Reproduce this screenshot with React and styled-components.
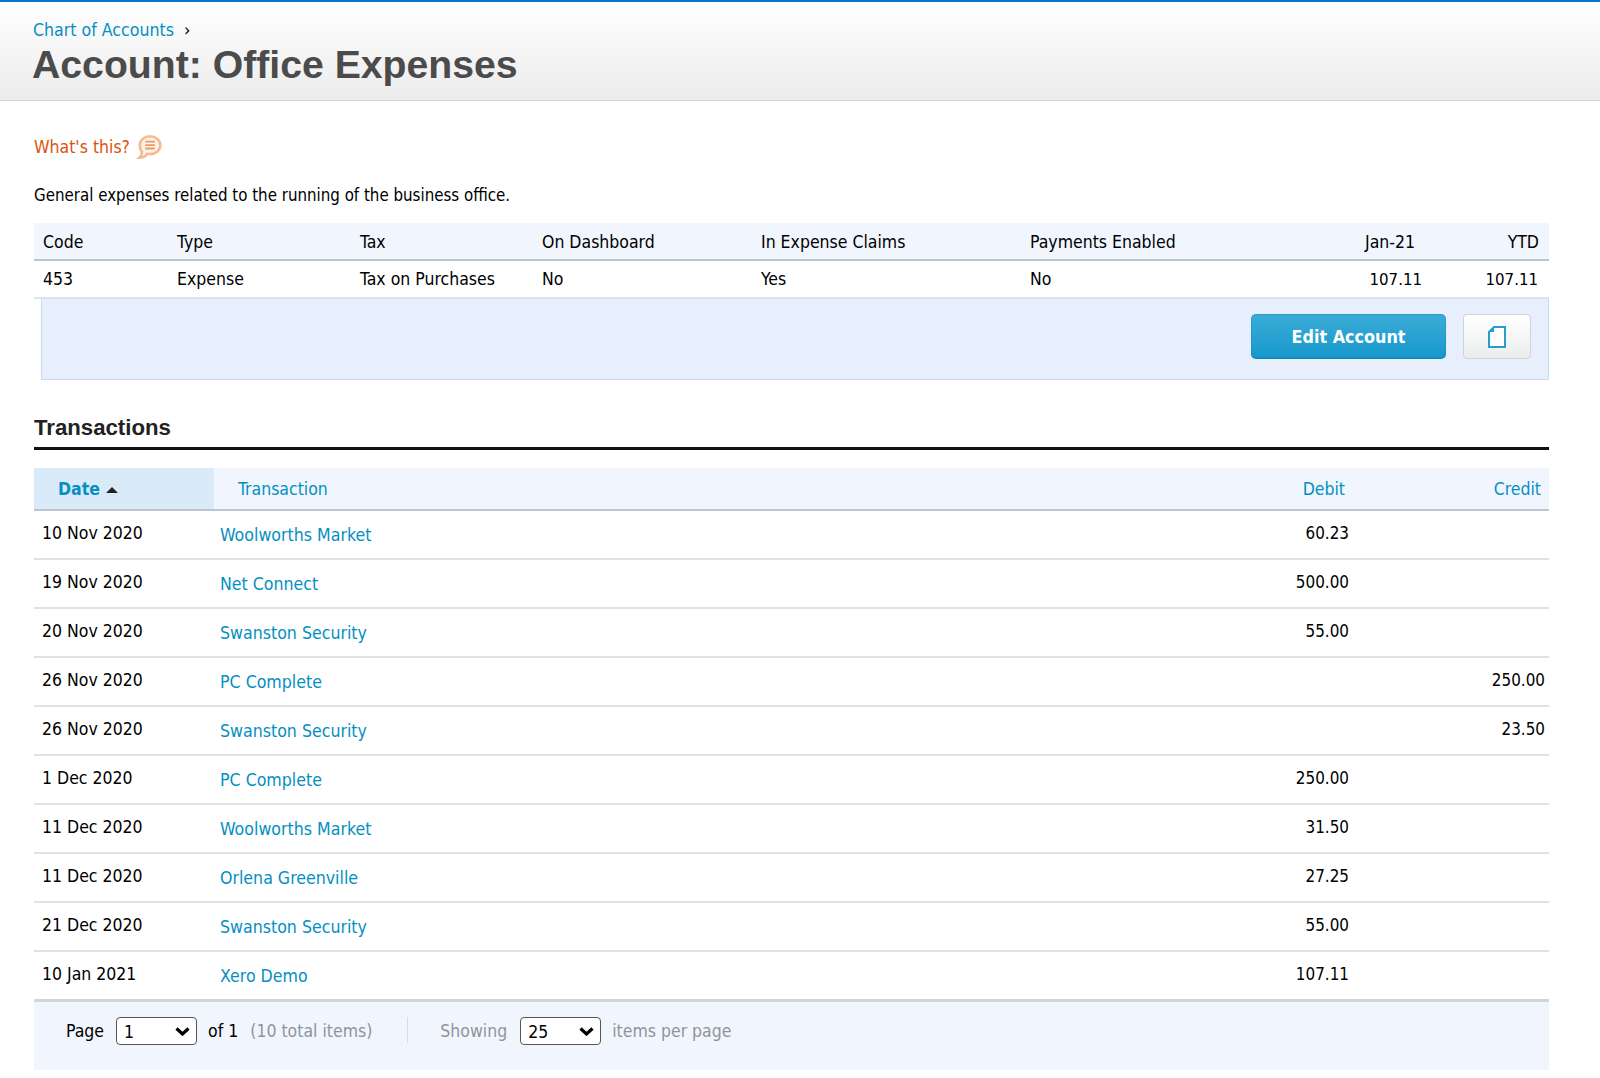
import React from 'react';
import styled, { createGlobalStyle } from 'styled-components';

const font = `"DejaVu Sans", Tahoma, Verdana, sans-serif`;
const heading = `"Liberation Sans", Arial, sans-serif`;
const blue = '#048fc2';
const chevron = `url("data:image/svg+xml,%3Csvg xmlns='http://www.w3.org/2000/svg' width='15' height='9' viewBox='0 0 15 9'%3E%3Cpath d='M1.5 1.5l6 5.5 6-5.5' fill='none' stroke='%23000' stroke-width='3.2'/%3E%3C/svg%3E")`;

const GlobalStyle = createGlobalStyle`
  html, body { margin: 0; padding: 0; background: #fff; }
  body { font-family: ${font}; font-size: 17.5px; font-stretch: condensed; color: #000; }
`;

const Page = styled.div`
  min-height: 1078px;
  display: flex;
  flex-direction: column;
`;

const Header = styled.header`
  height: 98px;
  box-sizing: content-box;
  border-top: 2px solid #0678cf;
  border-bottom: 1px solid #d6d6d6;
  margin-bottom: -1px;
  padding: 0 33px;
  background: linear-gradient(#ffffff, #ececec);
`;

const Crumbs = styled.div`
  padding-top: 17px;
  height: 22px;
  line-height: 22px;
  font-size: 17.6px;
  display: flex;
  align-items: center;
  gap: 10px;
`;

const Crumb = styled.a`
  color: ${blue};
  text-decoration: none;
`;

const Title = styled.h1`
  margin: 0 0 0 -1px;
  padding-top: 1px;
  font-family: ${heading};
  font-size: 39.2px;
  line-height: 46px;
  font-weight: 700;
  color: #4b4b4b;
  font-stretch: normal;
`;

const Main = styled.main`
  padding: 36px 51px 0 34px;
`;

const Help = styled.div`
  display: flex;
  align-items: center;
  gap: 5px;
  height: 22px;
  color: #d9550f;
  font-size: 17.5px;
`;

const Description = styled.p`
  margin: 26px 0 17px;
  line-height: 22px;
  font-size: 16.75px;
`;

const Table = styled.table`
  width: 100%;
  border-collapse: collapse;
  table-layout: fixed;
  font-size: 17.5px;
`;

const InfoHead = styled.th`
  height: 35px;
  padding: 1px ${p => (p.$right ? '10px' : '0')} 0 ${p => (p.$right ? '0' : '9px')};
  background: #f1f6fe;
  border-bottom: 2px solid #bcc6d3;
  font-weight: 400;
  text-align: ${p => (p.$right ? 'right' : 'left')};
`;

const InfoCell = styled.td`
  height: 36px;
  padding: 0 ${p => p.$padRight || 0}px 0 ${p => (p.$right ? '0' : '9px')};
  border-bottom: 2px solid #dde3ec;
  text-align: ${p => (p.$right ? 'right' : 'left')};
  font-size: ${p => (p.$right ? '16.7px' : 'inherit')};
`;

const Actions = styled.div`
  margin-left: 7px;
  height: 81px;
  box-sizing: border-box;
  border: 1px solid #c5d9f1;
  border-top: 0;
  background: #e8effc;
  padding: 15px 17px 0 0;
  display: flex;
  justify-content: flex-end;
  align-items: flex-start;
  gap: 17px;
`;

const EditButton = styled.button`
  width: 195px;
  height: 45px;
  border: 0;
  border-bottom: 1px solid #1586b4;
  border-radius: 5px;
  background: linear-gradient(#3cacd7, #1798cc);
  box-shadow: inset 0 0 0 1px rgba(20, 130, 175, 0.35);
  color: #fff;
  font-family: ${font};
  font-stretch: condensed;
  font-size: 17.8px;
  font-weight: 700;
`;

const IconButton = styled.button`
  width: 68px;
  height: 45px;
  padding: 0;
  display: flex;
  align-items: center;
  justify-content: center;
  border: 1px solid #d0d3d5;
  border-radius: 4px;
  background: linear-gradient(#ffffff, #ebeded);
`;

const SectionTitle = styled.h2`
  margin: 33px 0 0;
  height: 34px;
  font-family: ${heading};
  font-size: 22.2px;
  line-height: 30px;
  font-weight: 700;
  color: #222;
  border-bottom: 3px solid #111;
  box-sizing: content-box;
`;

const Transactions = styled(Table)`
  margin-top: 18px;
`;

const SortHead = styled.th`
  height: 40px;
  padding: 1px 0 0 ${p => p.$pad || 0}px;
  background: ${p => (p.$active ? '#d9eaf9' : '#f1f6fe')};
  border-bottom: 2px solid #bcc6d3;
  color: ${blue};
  font-weight: ${p => (p.$active ? 700 : 400)};
  text-align: ${p => (p.$right ? 'right' : 'left')};
  padding-right: ${p => p.$padRight || 0}px;
  font-size: 17.5px;
`;

const SortArrow = styled.span`
  display: inline-block;
  margin-left: 6px;
  vertical-align: 2px;
  border-left: 6px solid transparent;
  border-right: 6px solid transparent;
  border-bottom: 6px solid #222;
`;

const Row = styled.tr`
  height: 49px;
  border-bottom: 2px solid #dfe1e3;
  &:last-child {
    height: 48px;
    border-bottom: 0;
  }
`;

const DateCell = styled.td`
  padding: 0 0 3px 8px;
`;

const LinkCell = styled.td`
  padding: 1px 0 0 6px;
  color: ${blue};
  font-size: 17.6px;
`;

const AmountCell = styled.td`
  padding: 0 ${p => p.$pad}px 3px 0;
  text-align: right;
  font-size: 16.9px;
`;

const Footer = styled.footer`
  height: 71px;
  box-sizing: border-box;
  border-top: 3px solid #d2d4d6;
  background: #f1f6fe;
  padding: 16px 0 0 32px;
  display: flex;
  align-items: flex-start;
  font-size: 17.5px;
  line-height: 27px;
`;

const Muted = styled.span`
  color: #8f949a;
`;

const Divider = styled.span`
  width: 1px;
  height: 26px;
  margin: -1px 32px 0 35px;
  background: #d3deec;
`;

const PageSelect = styled.select`
  appearance: none;
  width: 81px;
  height: 28px;
  margin: -1px 11px 0 ${p => p.$gap}px;
  padding: 2px 0 0 7px;
  box-sizing: border-box;
  border: 1px solid #555;
  border-radius: 4px;
  background: #fff ${chevron} no-repeat right 6px center;
  color: #000;
  font-family: ${font};
  font-stretch: condensed;
  font-size: 17.5px;
`;

const TotalItems = styled(Muted)`
  margin-left: 12px;
`;

const ChatIcon = () => (
  <svg width="28" height="28" viewBox="0 0 26 26">
    <path d="M14 3c5.2 0 9.500 3.800 9.500 8.300s-4.300 8.300-9.500 8.300c-.9 0-1.800-.1-2.600-.3-1.300 2.100-4 3.700-7.400 3.700 1.500-1.400 2.400-3.200 2.600-5.500C5 15.900 4.500 13.500 4.500 11.300 4.500 6.800 8.800 3 14 3z" fill="#fef3ea" stroke="#f5bb90" strokeWidth="2.4" />
    <path d="M9.500 8h9M9.500 11.200h9M9.500 14.400h9" stroke="#eb9a63" strokeWidth="1.7" fill="none" />
  </svg>
);

const DocIcon = () => (
  <svg width="20" height="24" viewBox="0 0 20 24">
    <path d="M7 2h11v20H2V7z" fill="#fff" stroke="#2a9cc9" strokeWidth="2" />
    <path d="M7 2v5H2z" fill="#2a9cc9" />
  </svg>
);

const infoColumns = [134, 183, 182, 219, 269, 0, 85];

const transactions = [
  ['10 Nov 2020', 'Woolworths Market', '60.23', ''],
  ['19 Nov 2020', 'Net Connect', '500.00', ''],
  ['20 Nov 2020', 'Swanston Security', '55.00', ''],
  ['26 Nov 2020', 'PC Complete', '', '250.00'],
  ['26 Nov 2020', 'Swanston Security', '', '23.50'],
  ['1 Dec 2020', 'PC Complete', '250.00', ''],
  ['11 Dec 2020', 'Woolworths Market', '31.50', ''],
  ['11 Dec 2020', 'Orlena Greenville', '27.25', ''],
  ['21 Dec 2020', 'Swanston Security', '55.00', ''],
  ['10 Jan 2021', 'Xero Demo', '107.11', ''],
];

export default function App() {
  return (
    <Page>
      <GlobalStyle />
      <Header>
        <Crumbs>
          <Crumb href="#">Chart of Accounts</Crumb>
          <span>›</span>
        </Crumbs>
        <Title>Account: Office Expenses</Title>
      </Header>
      <Main>
        <Help>
          What's this? <ChatIcon />
        </Help>
        <Description>General expenses related to the running of the business office.</Description>
        <Table>
          <colgroup>
            {infoColumns.map((w, i) => (
              <col key={i} style={w ? { width: w } : undefined} />
            ))}
            <col style={{ width: 124 }} />
          </colgroup>
          <thead>
            <tr>
              <InfoHead>Code</InfoHead>
              <InfoHead>Type</InfoHead>
              <InfoHead>Tax</InfoHead>
              <InfoHead>On Dashboard</InfoHead>
              <InfoHead>In Expense Claims</InfoHead>
              <InfoHead>Payments Enabled</InfoHead>
              <InfoHead $right>Jan-21</InfoHead>
              <InfoHead $right>YTD</InfoHead>
            </tr>
          </thead>
          <tbody>
            <tr>
              <InfoCell>453</InfoCell>
              <InfoCell>Expense</InfoCell>
              <InfoCell>Tax on Purchases</InfoCell>
              <InfoCell>No</InfoCell>
              <InfoCell>Yes</InfoCell>
              <InfoCell>No</InfoCell>
              <InfoCell $right $padRight={3}>107.11</InfoCell>
              <InfoCell $right $padRight={11}>107.11</InfoCell>
            </tr>
          </tbody>
        </Table>
        <Actions>
          <EditButton>Edit Account</EditButton>
          <IconButton aria-label="Copy">
            <DocIcon />
          </IconButton>
        </Actions>
        <SectionTitle>Transactions</SectionTitle>
        <Transactions>
          <colgroup>
            <col style={{ width: 180 }} />
            <col />
            <col style={{ width: 200 }} />
            <col style={{ width: 200 }} />
          </colgroup>
          <thead>
            <tr>
              <SortHead $active $pad={24}>
                Date<SortArrow />
              </SortHead>
              <SortHead $pad={24}>Transaction</SortHead>
              <SortHead $right $padRight={4}>Debit</SortHead>
              <SortHead $right $padRight={8}>Credit</SortHead>
            </tr>
          </thead>
          <tbody>
            {transactions.map(([date, name, debit, credit], i) => (
              <Row key={i}>
                <DateCell>{date}</DateCell>
                <LinkCell>{name}</LinkCell>
                <AmountCell $pad={0}>{debit}</AmountCell>
                <AmountCell $pad={4}>{credit}</AmountCell>
              </Row>
            ))}
          </tbody>
        </Transactions>
        <Footer>
          Page
          <PageSelect $gap={12} defaultValue="1">
            <option>1</option>
          </PageSelect>
          of 1<TotalItems>(10 total items)</TotalItems>
          <Divider />
          <Muted>Showing</Muted>
          <PageSelect $gap={13} defaultValue="25">
            <option>25</option>
            <option>50</option>
          </PageSelect>
          <Muted>items per page</Muted>
        </Footer>
      </Main>
    </Page>
  );
}
